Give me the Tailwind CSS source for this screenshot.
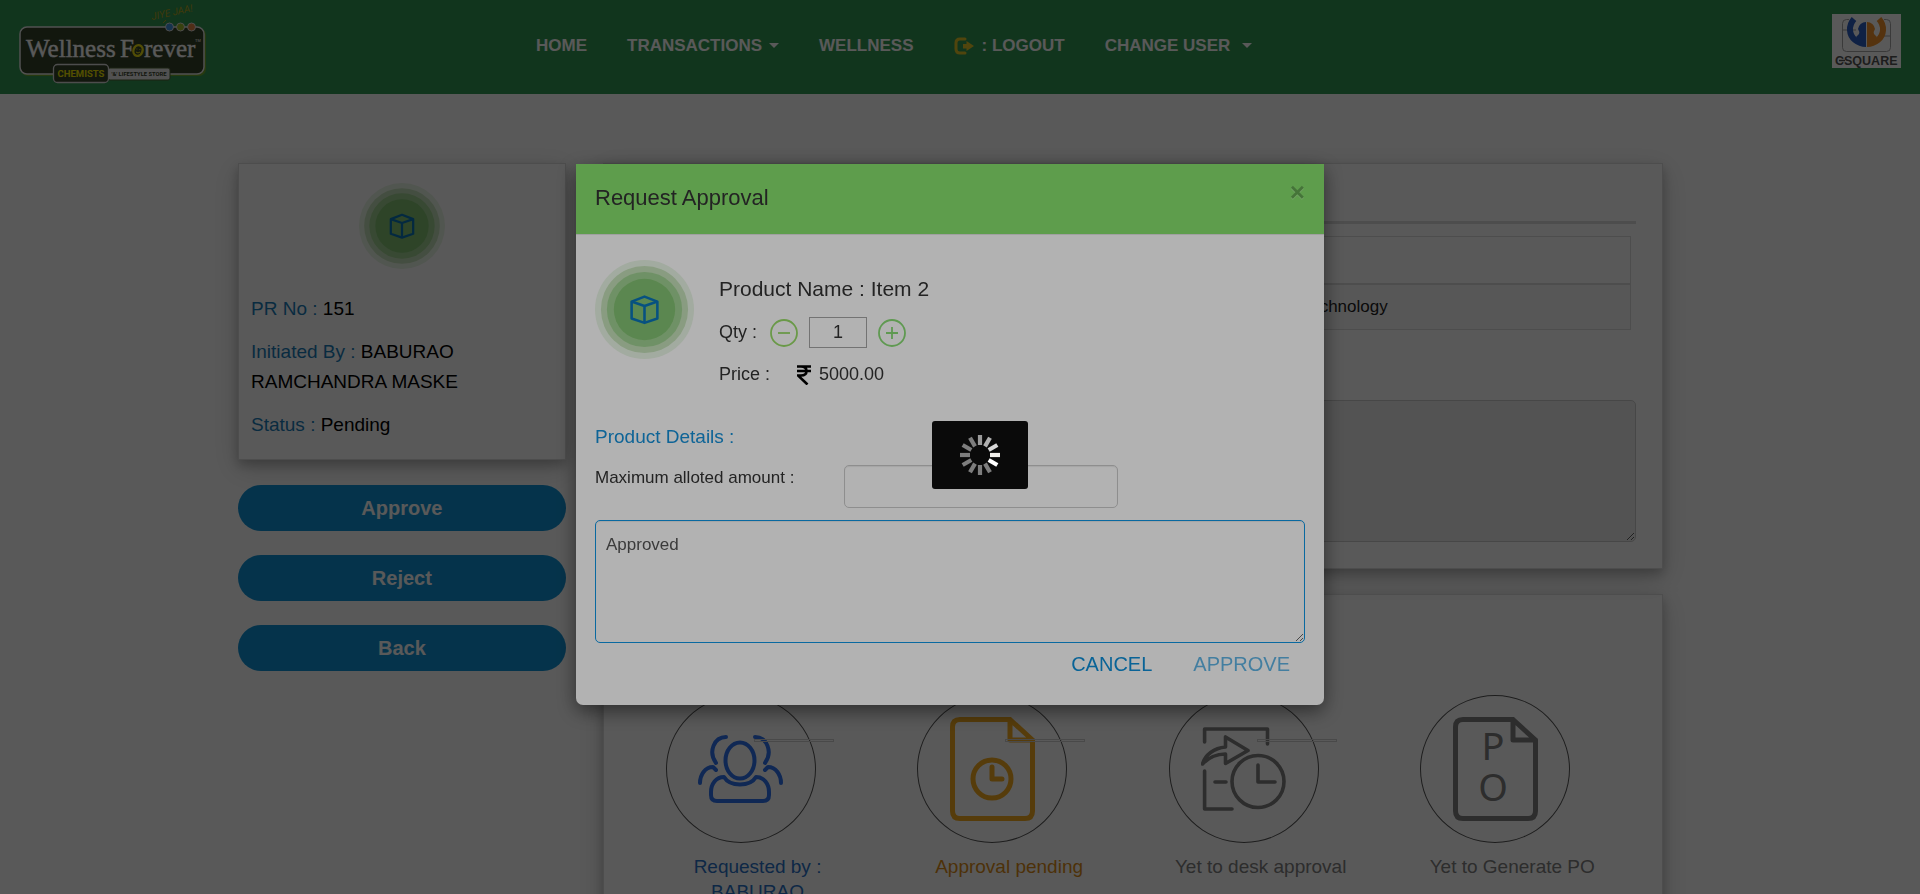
<!DOCTYPE html>
<html lang="en">
<head>
<meta charset="utf-8">
<title>Request Approval</title>
<script src="https://cdn.jsdelivr.net/npm/@tailwindcss/browser@4"></script>
</head>
<body class="h-screen overflow-hidden bg-white text-[17px] leading-[25px] text-[#333] font-['Liberation_Sans',Arial,sans-serif]">

<svg class="hidden" aria-hidden="true">
  <symbol id="product" viewBox="0 0 100 100">
    <circle cx="50" cy="50" r="50" fill="#e9f5e5"/>
    <circle cx="50" cy="50" r="44" fill="#c4e0b9"/>
    <circle cx="50" cy="50" r="38" fill="#a0d092"/>
    <circle cx="50" cy="50" r="31" fill="#83c273"/>
    <g fill="none" stroke="#0b75b8" stroke-width="2.600" stroke-linejoin="round">
      <path d="M50 37L63 42V59L50 63.500L37 59V42Z"/>
      <path d="M37 42L50 46.500L63 42M50 46.500V63"/>
    </g>
  </symbol>
</svg>

<header class="flex h-[94px] items-start bg-[#339755]">
  <a href="#" aria-label="Wellness Forever" class="ml-4 block shrink-0">
    <svg width="192" height="88" viewBox="16 0 192 88">
      <text x="152" y="20" transform="rotate(-12 152 20)" font-family="Roboto" font-size="10" font-style="italic" fill="#b3a51c">JIYE JAA!</text>
      <path d="M163 23l3-3" stroke="#b3a51c"/>
      <rect x="21" y="28" width="185" height="48" rx="7" fill="#6fa52b"/>
      <rect x="20" y="27" width="184" height="47" rx="7" fill="#354229" stroke="#e8e8e8" stroke-width="1.500"/>
      <circle cx="169.500" cy="27" r="4" fill="#3f93dc" stroke="#ddd"/>
      <circle cx="180.500" cy="27" r="4" fill="#a2b929" stroke="#ddd"/>
      <circle cx="191.500" cy="27" r="4" fill="#e48444" stroke="#ddd"/>
      <g font-family="Liberation Serif" font-size="25" fill="#fff" stroke="#fff" stroke-width="0.400">
        <text x="26" y="57">Wellness</text><text x="120" y="57">F</text><text x="144" y="57">rever</text>
      </g>
      <text x="195" y="42" font-family="Liberation Sans" font-size="4" fill="#fff">TM</text>
      <ellipse cx="138" cy="50.500" rx="4.500" ry="5.500" transform="rotate(20 138 50.500)" fill="#354229" stroke="#e8dc12" stroke-width="2.400"/>
      <path d="M136.500 49h.8M139.500 49.500h.8M136 52q2 2 4 0" fill="none" stroke="#e8dc12"/>
      <rect x="108" y="68" width="62" height="12" rx="2" fill="#e8e8e8" stroke="#4f6235"/>
      <rect x="53.500" y="64.500" width="55" height="18" rx="4" fill="#354229" stroke="#ddd" stroke-width="1.300"/>
      <text x="81" y="77" text-anchor="middle" font-family="Roboto" font-size="9.500" font-weight="700" fill="#f0e400">CHEMISTS</text>
      <text x="139" y="76" text-anchor="middle" font-family="Roboto" font-size="5.800" font-weight="700" fill="#354229">'&amp;' LIFESTYLE STORE</text>
    </svg>
  </a>
  <nav class="ml-[328px] mt-[33px] flex gap-10 whitespace-nowrap font-bold text-white">
    <a href="#">HOME</a>
    <a href="#" class="flex items-center gap-[7px]">TRANSACTIONS <svg width="10" height="5"><path d="M0 0H10L5 5Z" fill="#fff"/></svg></a>
    <a href="#">WELLNESS</a>
    <a href="#" class="flex items-center gap-2"><svg width="20" height="18" viewBox="0 0 20 18"><path d="M11 2H6Q2 2 2 6V12Q2 16 6 16H11" fill="none" stroke="#e5c526" stroke-width="3" stroke-linecap="round"/><path d="M9 7H12.500V4L20 9L12.500 14V11.500H9Z" fill="#e5c526"/></svg>: LOGOUT</a>
    <a href="#" class="flex items-center gap-3">CHANGE USER <svg width="10" height="5"><path d="M0 0H10L5 5Z" fill="#fff"/></svg></a>
  </nav>
  <svg class="ml-auto mr-[19px] mt-[14px] shrink-0" width="69" height="54" viewBox="0 0 69 54" role="img" aria-label="CSquare">
    <rect width="69" height="54" fill="#fff"/>
    <rect x="10.500" y="5.500" width="48" height="32" rx="4" fill="none" stroke="#a5a5a5"/>
    <path d="M11 16H24M46 22H58" stroke="#a5a5a5"/>
    <path d="M17 0H52V8H17Z" fill="#fff"/>
    <path d="M22 5C16 12 17 21 23 26Q28 30 34 30" fill="none" stroke="#2d5fc2" stroke-width="6"/>
    <path d="M34 8A8 8 0 0 0 26 15Q28 18 27 20L24 23Q28 31 34 32Z" fill="#2d5fc2"/>
    <path d="M47 5C53 12 52 21 46 26Q41 30 35 30" fill="none" stroke="#f2932b" stroke-width="6"/>
    <path d="M35 8A8 8 0 0 1 43 15Q41 18 42 20L45 23Q41 31 35 32Z" fill="#f2932b"/>
    <path d="M34.500 7V34" stroke="#fff"/>
    <text x="3" y="50.500" font-family="Liberation Sans" font-size="12.500" font-weight="700" fill="#555">CSQUARE</text>
    <path d="M7 46.500h6" stroke="#555" stroke-width="1.500"/>
  </svg>
</header>

<main class="flex items-start gap-[37px] pl-[238px] pr-[257px] pt-[69px]">
  <aside class="w-[23%] shrink-0">
    <section class="border border-[#dcdcdc] px-3 pb-[19px] pt-[19px] text-[19px] leading-[30px] text-black shadow-[0_5px_10px_rgba(0,0,0,0.2),0_8px_25px_rgba(0,0,0,0.19)]">
      <svg class="mx-auto mb-[25px] size-[86px]"><use href="#product"/></svg>
      <p class="mb-[13px]"><span class="text-[#1b7cb8]">PR No :</span> 151</p>
      <p class="mb-[13px] max-w-[230px]"><span class="text-[#1b7cb8]">Initiated By :</span> BABURAO RAMCHANDRA MASKE</p>
      <p><span class="text-[#1b7cb8]">Status :</span> Pending</p>
    </section>
    <div class="mt-[25px] flex flex-col gap-6 text-xl font-bold text-white">
      <button class="h-[46px] rounded-full bg-[#1193d6]">Approve</button>
      <button class="h-[46px] rounded-full bg-[#1193d6]">Reject</button>
      <button class="h-[46px] rounded-full bg-[#1193d6]">Back</button>
    </div>
  </aside>

  <div class="min-w-0 flex-1">
    <section class="border border-[#dcdcdc] px-[26px] pb-[26px] shadow-[0_5px_10px_rgba(0,0,0,0.2),0_8px_25px_rgba(0,0,0,0.19)]">
      <h2 class="flex h-[60px] items-center border-b-[3px] border-[#dcdcdc] text-xl">Request Details</h2>
      <table class="mx-[5px] mt-3 w-[calc(100%-10px)] table-fixed border-collapse border border-[#dcdcdc] text-left">
        <thead><tr class="h-[47px] border-b-2 border-[#dcdcdc]"><th class="w-[565px] pl-3">Item</th><th class="pl-3">Group</th></tr></thead>
        <tbody><tr class="h-[46px] bg-[#f9f9f9]"><td class="pl-3">Item 2</td><td class="whitespace-nowrap pl-3 text-[#222]">Information Technology</td></tr></tbody>
      </table>
      <label for="remarks" class="mb-2 mt-[37px] block">Remarks :</label>
      <textarea id="remarks" readonly class="block h-[142px] w-full rounded-[5px] border border-[#ccc] bg-[#eee]"></textarea>
    </section>

    <section class="mt-[25px] border border-[#dcdcdc] pl-7 pr-6 shadow-[0_5px_10px_rgba(0,0,0,0.2),0_8px_25px_rgba(0,0,0,0.19)]">
      <h2 class="h-[100px] pt-6 text-xl">Status</h2>
      <ol class="grid grid-cols-4 pb-10 text-[19px] text-[#808080]">
        <li class="relative">
          <div class="ml-[34px] flex h-[148px] w-[150px] items-center justify-center rounded-[50%] border border-[#555]">
            <svg width="85" height="68" viewBox="0 0 85 68" fill="none" stroke="#2f74f0" stroke-width="4" stroke-linecap="round" stroke-linejoin="round"><ellipse cx="42" cy="25.500" rx="14.500" ry="18"/><path d="M26 42C32 52 52 52 58 42C66 42 71 49 71 57V60Q71 66 65 66H19Q13 66 13 60V57C13 49 18 42 26 42Z"/><path d="M28 2C16 2 10 17 18 28M57 2C69 2 75 17 67 28M18 35L15 32C7 32 2 40 2 48M67 35L70 32C78 32 83 40 83 48"/></svg>
          </div>
          <div class="absolute left-[122px] top-11 h-[3px] w-20 border border-[#d0d0d0]"></div>
          <p class="mx-auto mt-[11px] w-[200px] text-center text-[#2a72c8]">Requested by : BABURAO RAMCHANDRA MASKE</p>
        </li>
        <li class="relative">
          <div class="ml-[34px] flex h-[148px] w-[150px] items-center justify-center rounded-[50%] border border-[#555]">
            <svg width="85" height="104" viewBox="0 0 85 104" fill="none" stroke="#f5ac20" stroke-width="5" stroke-linecap="round" stroke-linejoin="round"><path d="M60 2.500H10Q2.500 2.500 2.500 10V94Q2.500 101.500 10 101.500H75Q82.500 101.500 82.500 94V23L60 2.500V23H82.500"/><circle cx="42" cy="62" r="19"/><path d="M42 50V62H52"/></svg>
          </div>
          <div class="absolute left-[122px] top-11 h-[3px] w-20 border border-[#d0d0d0]"></div>
          <p class="mx-auto mt-[11px] w-[200px] text-center text-[#dd8e18]">Approval pending</p>
        </li>
        <li class="relative">
          <div class="ml-[34px] flex h-[148px] w-[150px] items-center justify-center rounded-[50%] border border-[#555]">
            <svg width="85" height="84" viewBox="0 0 85 84" fill="none" stroke="#808080" stroke-width="3.600" stroke-linecap="round" stroke-linejoin="round"><path d="M3.600 15V2H66.500V17M3.600 44V82H31M14 55H25"/><circle cx="57" cy="54.500" r="26"/><path d="M57 38V55H74"/><path d="M47 23.500L24.500 10V20C13 21 4 28 1.500 37C8 30 15 27 24.500 27V36.500Z"/></svg>
          </div>
          <div class="absolute left-[122px] top-11 h-[3px] w-20 border border-[#d0d0d0]"></div>
          <p class="mx-auto mt-[11px] w-[200px] text-center">Yet to desk approval</p>
        </li>
        <li class="relative">
          <div class="ml-[34px] flex h-[148px] w-[150px] items-center justify-center rounded-[50%] border border-[#555]">
            <svg width="85" height="104" viewBox="0 0 85 104" fill="none" stroke="#808080" stroke-width="5" stroke-linecap="round" stroke-linejoin="round"><path d="M60 2.500H10Q2.500 2.500 2.500 10V94Q2.500 101.500 10 101.500H75Q82.500 101.500 82.500 94V23L60 2.500V23H82.500"/><g font-family="Noto Sans" font-size="38" fill="#808080" stroke="none" text-anchor="middle"><text x="40" y="43">P</text><text x="40" y="84">O</text></g></svg>
          </div>
          <p class="mx-auto mt-[11px] w-[200px] text-center">Yet to Generate PO</p>
        </li>
      </ol>
    </section>
  </div>
</main>

<!-- Modal dialog over its backdrop -->
<div class="fixed inset-0 flex items-start justify-center bg-black/50 pr-5 pt-[164px]">
  <div role="dialog" aria-labelledby="dialog-title" class="w-[748px] overflow-hidden rounded-b-[7px] bg-white shadow-[0_6px_19px_rgba(0,0,0,0.5)]">
    <div class="flex h-[71px] items-start justify-between border-b border-[#e5e5e5] bg-[#87e16e] px-[19px] pt-[19px]">
      <h1 id="dialog-title" class="text-[22px] leading-[30px]">Request Approval</h1>
      <button aria-label="Close" class="text-[26px] font-bold leading-[18px] text-black opacity-25 [text-shadow:0_1px_0_#fff]">×</button>
    </div>
    <div class="px-[19px] pb-7 pt-[25px]">
      <div class="flex">
        <svg class="size-[99px] shrink-0"><use href="#product"/></svg>
        <div class="ml-[25px] pt-4 text-lg leading-[25px]">
          <p class="text-[21px]">Product Name : Item 2</p>
          <div class="mt-4 flex h-[31px] items-center">
            <label for="qty" class="w-[51px]">Qty :</label>
            <button aria-label="Decrease"><svg width="28" height="28" fill="none" stroke="#98dc68" stroke-width="1.800"><circle cx="14" cy="14" r="13"/><path d="M8 14H20"/></svg></button>
            <input id="qty" value="1" class="mx-[11px] h-[31px] w-[58px] border border-[#a5a5a5] text-center">
            <button aria-label="Increase"><svg width="28" height="28" fill="none" stroke="#88dc74" stroke-width="1.800"><circle cx="14" cy="14" r="13"/><path d="M8 14H20M14 8V20"/></svg></button>
          </div>
          <div class="mt-[14px] flex items-center">
            <span class="w-[78px]">Price :</span>
            <svg width="14" height="20" viewBox="0 0 14 20" fill="none" stroke="#000" stroke-width="2.600"><path d="M0 1.500H14M0 6H14M0 1.500H4Q9.500 1.500 9.500 6Q9.500 10.500 4 10.500H1L10.500 19.500"/></svg>
            <span class="ml-[8px]">5000.00</span>
          </div>
        </div>
      </div>
      <h2 class="mt-[37px] text-[19px] text-[#1590d8]">Product Details :</h2>
      <div class="mt-4 flex items-start">
        <label for="amount" class="w-[249px]">Maximum alloted amount :</label>
        <input id="amount" class="h-[43px] w-[274px] rounded-[5px] border border-[#ccc] px-3 shadow-[inset_0_1px_1px_rgba(0,0,0,0.075)]">
      </div>
      <textarea aria-label="Remarks" class="mt-3 block h-[123px] w-full rounded-[5px] border border-[#0e97e5] px-[10px] pt-[11px] text-[#555] shadow-[inset_0_1px_1px_rgba(0,0,0,0.075)]">Approved</textarea>
      <div class="mt-2 flex justify-end gap-[41px] pr-[15px] text-xl leading-[26px]">
        <button class="text-[#0e8fd8]">CANCEL</button>
        <button class="text-[#0e8fd8] opacity-65">APPROVE</button>
      </div>
    </div>
  </div>
</div>

<!-- Loading indicator -->
<div class="fixed inset-0 bg-black/30">
  <div role="status" aria-label="Loading" class="absolute left-1/2 top-1/2 -ml-7 -mt-[26px] flex h-[68px] w-24 items-center justify-center rounded-[3px] bg-[#0a0a0a]">
    <svg width="40" height="40" viewBox="-20 -20 40 40" stroke="#7d7d7d" stroke-width="4.200">
      <path d="M0-10V-20" stroke="#9a9a9a"/>
      <path d="M0-10V-20" stroke="#b0b0b0" transform="rotate(30)"/>
      <path d="M0-10V-20" stroke="#d8d8d8" transform="rotate(60)"/>
      <path d="M0-10V-20" stroke="#f2f0ec" transform="rotate(90)"/>
      <path d="M0-10V-20" stroke="#fff" transform="rotate(120)"/>
      <path d="M0-10V-20" transform="rotate(150)"/>
      <path d="M0-10V-20" transform="rotate(180)"/>
      <path d="M0-10V-20" transform="rotate(210)"/>
      <path d="M0-10V-20" transform="rotate(240)"/>
      <path d="M0-10V-20" transform="rotate(270)"/>
      <path d="M0-10V-20" transform="rotate(300)"/>
      <path d="M0-10V-20" transform="rotate(330)"/>
    </svg>
  </div>
</div>
</body>
</html>
